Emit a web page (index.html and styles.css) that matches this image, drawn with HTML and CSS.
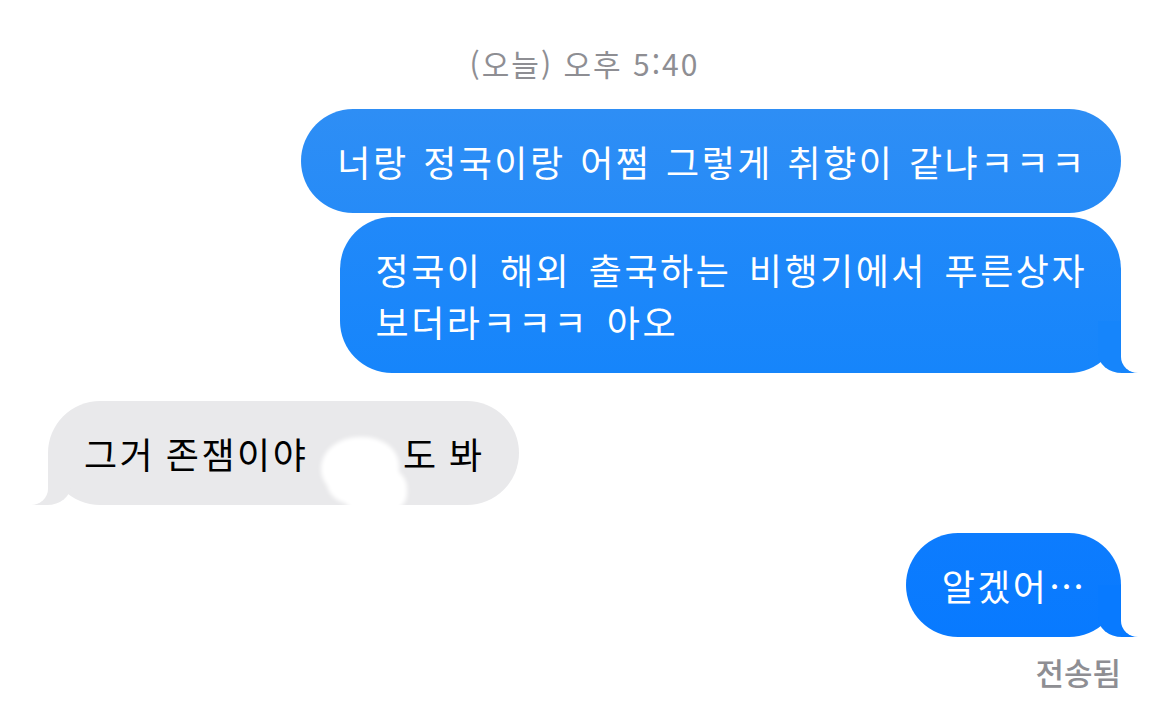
FILE: index.html
```html
<!DOCTYPE html>
<html lang="ko">
<head>
    <meta charset="UTF-8">
    <meta name="viewport" content="width=device-width, initial-scale=1.0">
    <title>메시지</title>
    <link rel="stylesheet" href="styles.css">
</head>
<body>
    <div class="chat">
        <div class="time">(오늘) 오후 5:40</div>

        <div class="msg sent first">너랑 정국이랑 어쩜 그렇게 취향이 같냐ㅋㅋㅋ</div>
        <div class="msg sent second tail">정국이 해외 출국하는 비행기에서 푸른상자<br>보더라ㅋㅋㅋ 아오</div>

        <div class="msg received tail group">그거 존잼이야 <span class="hidden-word"></span>도 봐</div>

        <div class="msg sent last tail group">알겠어…</div>
        <div class="status">전송됨</div>
    </div>
</body>
</html>
```

FILE: styles.css
```css
body {
    margin: 0;
    background-color: #fff;
    font-family: "Noto Sans CJK KR", "Noto Sans", sans-serif;
}

.chat {
    display: flex;
    flex-direction: column;
    padding: 43px 49px 0 48px;
}

.time {
    align-self: center;
    font-size: 30px;
    line-height: 40px;
    letter-spacing: 2px;
    color: #8e8e93;
    margin-bottom: 26px;
}

.msg {
    position: relative;
    font-size: 36px;
    line-height: 52px;
    letter-spacing: 2.5px;
    word-spacing: 2px;
    padding: 26px 34px 26px 36px;
    border-radius: 52px;
    max-width: 800px;
}

.msg.sent {
    align-self: flex-end;
    color: #fff;
}

.msg.received {
    align-self: flex-start;
    color: #000;
    background-color: #e9e9eb;
    word-spacing: -2px;
}

.msg.first {
    background: linear-gradient(#2e8ef5, #268bf7);
}

.msg.second {
    margin-top: 4px;
    word-spacing: 5px;
    background: linear-gradient(#2189f9, #1685fb);
}

.msg.last {
    background: linear-gradient(#0d7cfe, #087aff);
}

.msg.group {
    margin-top: 28px;
}

/* bubble tails */
.msg.tail::before,
.msg.tail::after {
    content: "";
    position: absolute;
    bottom: 0;
    height: 52px;
}

.msg.sent.tail::before {
    right: -17px;
    width: 40px;
    border-bottom-left-radius: 24px 20px;
}

.msg.second.tail::before {
    background-color: #1685fb;
}

.msg.last.tail::before {
    background-color: #087aff;
}

.msg.sent.tail::after {
    right: -40px;
    width: 40px;
    background-color: #fff;
    border-bottom-left-radius: 17px 16px;
}

.msg.received.tail::before {
    left: -17px;
    width: 40px;
    background-color: #e9e9eb;
    border-bottom-right-radius: 24px 20px;
}

.msg.received.tail::after {
    left: -40px;
    width: 40px;
    background-color: #fff;
    border-bottom-right-radius: 17px 16px;
}

/* censored word */
.hidden-word {
    position: relative;
    display: inline-block;
    width: 84px;
    height: 1px;
}

.hidden-word::after {
    content: "";
    position: absolute;
    left: 2px;
    bottom: -30px;
    width: 78px;
    height: 62px;
    background-color: #fff;
    border-radius: 50% 46% 44% 48%;
    box-shadow: 14px 22px 0 -6px #fff, -2px 14px 0 -8px #fff;
    filter: blur(2px);
}

.status {
    align-self: flex-end;
    margin-top: 15px;
    font-size: 31px;
    line-height: 40px;
    font-weight: 500;
    color: #8e8e93;
}
```
